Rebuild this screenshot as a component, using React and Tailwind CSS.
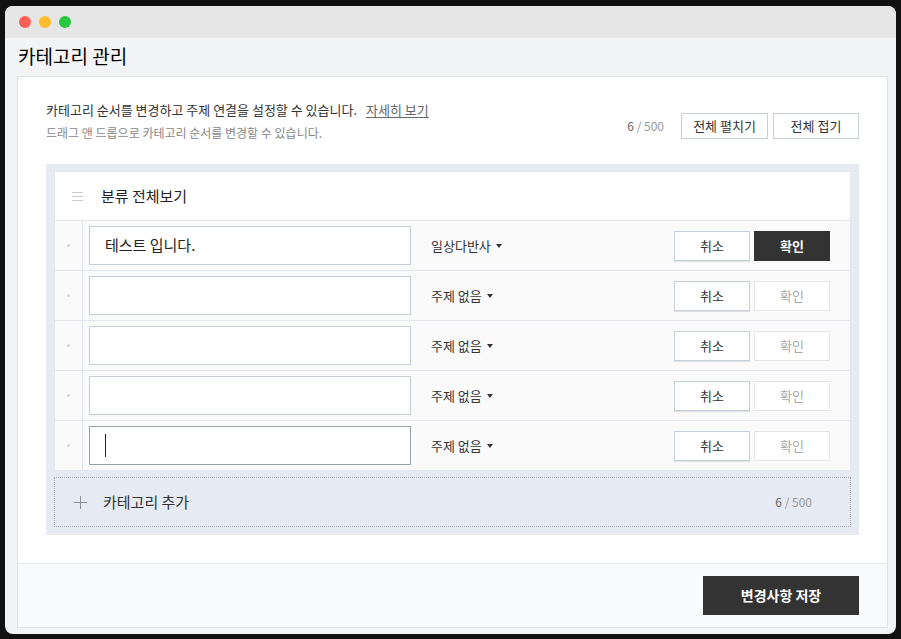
const rows = [
  { id: 1, value: '테스트 입니다.', topic: '일상다반사', active: true },
  { id: 2, value: '', topic: '주제 없음' },
  { id: 3, value: '', topic: '주제 없음' },
  { id: 4, value: '', topic: '주제 없음' },
  { id: 5, value: '', topic: '주제 없음', focused: true },
];

const font = { fontFamily: '"Noto Sans CJK KR", "Noto Sans", sans-serif' };

const Caret = () => (
  <svg width="6" height="4" viewBox="0 0 6 4" className="ml-[5px]">
    <path d="M0 0 L6 0 L3 4 Z" fill="#333" />
  </svg>
);

const CategoryRow = ({ row }) => (
  <div className="flex h-[50px] border-b border-[#e3e6ec] bg-[#fafafa] last:h-[49px] last:border-b-0">
    <div className="flex w-[28px] items-center justify-center border-r border-[#e3e6ec]">
      <span className="block h-[3px] w-[3px] rounded-full bg-[#d4d7dc]" />
    </div>
    <div className="flex flex-1 items-center pl-[6px] pr-[20px]">
      <div
        className={`flex h-[39px] w-[322px] items-center border bg-white pl-[15px] text-[15px] text-[#222] ${
          row.focused ? 'border-[#9aa0a8]' : 'border-[#c8ced8]'
        }`}
      >
        {row.value}
        {row.focused && <span className="block h-[23px] w-px bg-[#222]" />}
      </div>
      <button className="ml-[20px] flex items-center text-[13px] text-[#333]">
        {row.topic}
        <Caret />
      </button>
      <div className="ml-auto flex gap-[4px]">
        <button className="h-[30px] w-[76px] border border-[#c8ced8] bg-white text-[13px] text-[#333] shadow-[0_1px_0_#dde1e7]">
          취소
        </button>
        {row.active ? (
          <button className="h-[30px] w-[76px] bg-[#333] text-[13px] font-bold text-white">확인</button>
        ) : (
          <button className="h-[30px] w-[76px] border border-[#e3e6ea] bg-white text-[13px] text-[#aaa]">
            확인
          </button>
        )}
      </div>
    </div>
  </div>
);

export default function App() {
  return (
    <div className="h-[639px] w-[901px] overflow-hidden bg-[#111] pt-[6px]" style={font}>
      <div className="ml-[5px] flex h-[628px] w-[891px] flex-col overflow-hidden rounded-[8px] bg-[#f3f4f6]">
        {/* title bar */}
        <div className="flex h-[32px] items-center gap-[8px] bg-[#e6e6e6] pl-[14px]">
          <span className="h-[12px] w-[12px] rounded-full bg-[#fe5f57]" />
          <span className="h-[12px] w-[12px] rounded-full bg-[#febc2e]" />
          <span className="h-[12px] w-[12px] rounded-full bg-[#28c840]" />
        </div>

        <div className="flex h-[38px] items-center pl-[13px] pb-[2px] text-[19px] text-black">카테고리 관리</div>

        <div className="ml-[12px] flex h-[552px] w-[871px] flex-col border border-[#dfe2e8] bg-white">
          <div className="flex-1 px-[28px] pt-[23px]">
            <div className="flex items-start justify-between">
              <div>
                <p className="text-[13px] leading-[20px] text-[#333]">
                  카테고리 순서를 변경하고 주제 연결을 설정할 수 있습니다.
                  <a className="ml-[9px] text-[#666] underline underline-offset-2">자세히 보기</a>
                </p>
                <p className="mt-[3px] text-[12px] leading-[20px] text-[#888]">
                  드래그 앤 드롭으로 카테고리 순서를 변경할 수 있습니다.
                </p>
              </div>
              <div className="mt-[13px] flex items-center">
                <span className="mr-[17px] text-[12px] text-[#999]">
                  <span className="text-[#666]">6</span> / 500
                </span>
                <button className="h-[26px] w-[87px] border border-[#c8ced8] bg-white text-[13px] text-[#333]">
                  전체 펼치기
                </button>
                <button className="ml-[5px] h-[26px] w-[86px] border border-[#c8ced8] bg-white text-[13px] text-[#333]">
                  전체 접기
                </button>
              </div>
            </div>

            {/* category panel */}
            <div className="mt-[21px] bg-[#e6eaf2] px-[8px] pb-[8px] pt-[7px]">
              <div className="border border-[#e3e6ec] bg-white">
                <div className="flex h-[49px] items-center border-b border-[#e3e6ec] pl-[17px]">
                  <svg width="11" height="9" viewBox="0 0 11 9">
                    <path d="M0 0.5H11M0 4.5H11M0 8.5H11" stroke="#c9ccd1" strokeWidth="1" />
                  </svg>
                  <span className="ml-[18px] text-[15px] text-[#222]">분류 전체보기</span>
                </div>
                {rows.map((row) => (
                  <CategoryRow key={row.id} row={row} />
                ))}
              </div>

              <div className="mt-[6px] flex h-[50px] items-center border border-dotted border-[#a9adb4] pl-[19px] pr-[38px]">
                <svg width="13" height="13" viewBox="0 0 13 13">
                  <path d="M6.5 0V13M0 6.5H13" stroke="#8c9096" strokeWidth="1" />
                </svg>
                <span className="ml-[16px] text-[15px] text-[#333]">카테고리 추가</span>
                <span className="ml-auto text-[12px] text-[#999]">
                  <span className="text-[#666]">6</span> / 500
                </span>
              </div>
            </div>
          </div>

          {/* footer */}
          <div className="flex h-[64px] items-start justify-end border-t border-[#e8ebef] bg-[#f9fafb] pr-[28px] pt-[12px]">
            <button className="h-[39px] w-[156px] bg-[#333] text-[14px] font-bold text-white">변경사항 저장</button>
          </div>
        </div>
      </div>
    </div>
  );
}
